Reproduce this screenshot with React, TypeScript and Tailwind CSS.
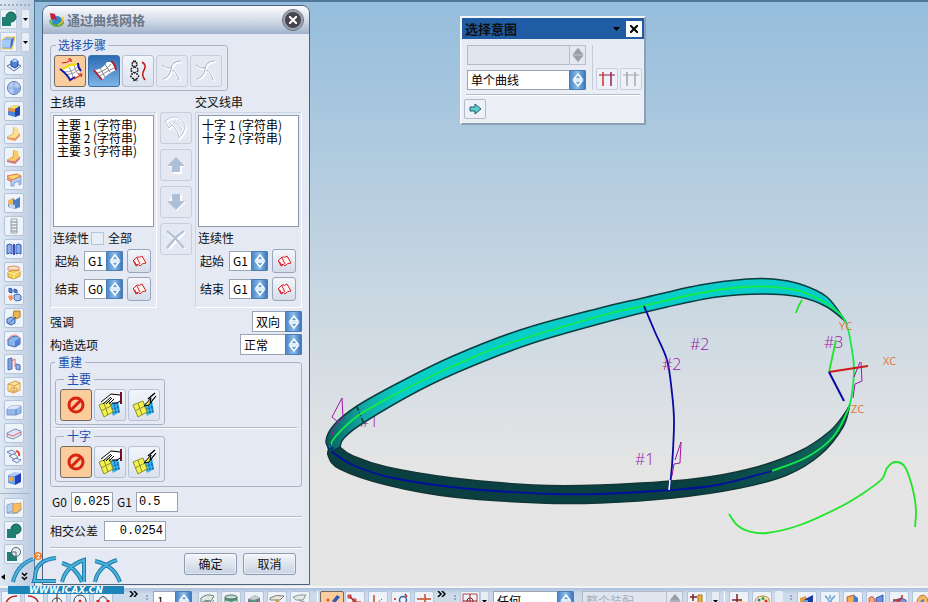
import { useState } from "react";
import type { ReactNode } from "react";
import clsx from "clsx";

type Point = [number, number];

// Catmull-Rom through every point, written out as cubic segments
const curve = (pts: Point[]) => {
  let d = "";
  for (let i = 0; i < pts.length - 1; i++) {
    const p0 = pts[i - 1] || pts[i];
    const p1 = pts[i];
    const p2 = pts[i + 1];
    const p3 = pts[i + 2] || p2;
    d += ` C${p1[0] + (p2[0] - p0[0]) / 6} ${p1[1] + (p2[1] - p0[1]) / 6} ${
      p2[0] - (p3[0] - p1[0]) / 6
    } ${p2[1] - (p3[1] - p1[1]) / 6} ${p2[0]} ${p2[1]}`;
  }
  return d;
};

const open = (pts: Point[]) => `M${pts[0][0]} ${pts[0][1]}${curve(pts)}`;

const upperOuter: Point[] = [
  [331, 452], [326, 441], [334, 425], [357, 406], [400, 382], [453, 356], [520, 330], [600, 308],
  [643, 298], [700, 285], [747, 279], [773, 279], [800, 284], [827, 297], [846, 322],
];
const upperInner: Point[] = [
  [846, 322], [827, 307], [800, 297], [763, 294], [717, 297], [667, 307], [610, 321], [533, 343],
  [470, 367], [420, 390], [363, 423], [344, 438], [340, 447],
];
const lowerInner: Point[] = [
  [340, 447], [353, 456], [387, 467], [453, 478], [533, 485], [600, 485], [693, 479], [753, 468],
  [800, 451], [830, 431], [845, 413], [850, 404],
];
const lowerOuter: Point[] = [
  [850, 404], [843, 427], [820, 455], [787, 475], [740, 488], [673, 498], [600, 503], [540, 503],
  [453, 497], [387, 485], [340, 469], [328, 455], [331, 444],
];
const greenTop: Point[] = [
  [330, 448], [335, 437], [359, 415], [400, 392], [453, 366], [507, 344], [600, 316], [643, 306],
  [700, 293], [743, 287], [773, 287], [803, 292], [833, 308], [846, 323], [852, 350], [854, 370],
  [852, 393], [848, 410], [833, 437], [807, 457], [772, 471],
];
const blueBottom: Point[] = [
  [772, 471], [717, 485], [670, 490], [600, 494], [553, 494], [470, 489], [393, 478], [353, 465],
  [332, 452],
];
const blueSection: Point[] = [
  [644, 306], [655, 332], [667, 360], [672, 393], [674, 420], [673, 450], [671, 477], [669, 490],
];
const looseCurve: Point[] = [
  [729, 514], [737, 525], [748, 531], [767, 533], [800, 525], [840, 507], [865, 492], [882, 479],
  [887, 468], [895, 462], [905, 467], [913, 490], [916, 510], [915, 527],
];

const Scene = () => (
  <svg
    viewBox="35 2 893 584"
    preserveAspectRatio="xMinYMin slice"
    className="block h-full w-full font-['Open_Sans',sans-serif]"
    fill="none"
  >
    <defs>
      <linearGradient id="band" x1="326" x2="400" y1="0" y2="0" gradientUnits="userSpaceOnUse">
        <stop offset="0" stopColor="#0a5c5c" />
        <stop offset="0.5" stopColor="#12a8a4" />
        <stop offset="1" stopColor="#0accc8" />
      </linearGradient>
      <linearGradient id="under" x1="700" x2="850" y1="0" y2="0" gradientUnits="userSpaceOnUse">
        <stop offset="0" stopColor="#0a4042" />
        <stop offset="1" stopColor="#106a60" />
      </linearGradient>
    </defs>
    <text x="359" y="427" fontSize="16" fontWeight="300" fill="#a018a0">#1</text>
    <path
      d={`${open(lowerInner)}${curve(lowerOuter)}Z`}
      fill="url(#under)"
      stroke="#123636"
      strokeWidth="1.5"
    />
    <path
      d={`${open(upperOuter)}${curve(upperInner)}Z`}
      fill="url(#band)"
      stroke="#0c3c40"
      strokeWidth="1.5"
    />
    <path d="M357 407l7 17" stroke="#0c3030" strokeWidth="1.5" strokeDasharray="4 2" />
    <path d={open(greenTop)} stroke="#10ec48" strokeWidth="1.8" />
    <path d={open(blueBottom)} stroke="#00109c" strokeWidth="1.8" />
    <path d={open(blueSection)} stroke="#0808a4" strokeWidth="1.8" />
    <path d={open(looseCurve)} stroke="#20e428" strokeWidth="1.8" />
    <path d="M669 490l1-10" stroke="#fff" strokeWidth="1.5" />
    <path d="M802 300q-4 6-6 13M829 372l7-32" stroke="#20e428" strokeWidth="1.8" />
    <path d="M829 372l39-6" stroke="#d01818" strokeWidth="2" />
    <path d="M829 372l15 29" stroke="#0808a4" strokeWidth="2" />
    <path d="M327 448h7M330 444l3 8" stroke="#00109c" />
    <path
      d="M342 398l-10 19 6 5 5-4-1-20M338 422q-6 6-6 13M861 362l1 19-7 3M860 362l-6 15M853 398l2-14M681 442l-1 21-6 1M681 442l-6 18M674 464l-2 12"
      stroke="#a018a0"
      strokeWidth="1"
    />
    <g fontSize="16" fontWeight="300" fill="#9c18a4">
      <text x="690" y="350">#2</text>
      <text x="662" y="370">#2</text>
      <text x="824" y="348">#3</text>
      <text x="635" y="465">#1</text>
    </g>
    <g fontSize="11" fill="#e07838">
      <text x="839" y="330">YC</text>
      <text x="883" y="365">XC</text>
      <text x="851" y="413">ZC</text>
    </g>
  </svg>
);

const Icon = ({ children, size = "h-4 w-4" }: { children: ReactNode; size?: string }) => (
  <svg viewBox="0 0 16 16" className={clsx(size, "block shrink-0")} fill="none" aria-hidden="true">
    {children}
  </svg>
);

const featureIcons: { name: string; art: ReactNode }[] = [
  {
    name: "拉伸",
    art: (
      <>
        <path d="M1 9l7-4 7 4-7 5z" fill="#e8eefa" stroke="#5c78a8" />
        <path d="M5 4l4-2 3 2v5l-3 2-4-2z" fill="#4c84d8" stroke="#24489c" />
        <path d="M5 4l4 1 3-1-3-2z" fill="#c4dcfc" />
      </>
    ),
  },
  {
    name: "球体",
    art: (
      <>
        <circle cx="8" cy="8" r="6.5" fill="#b4ccf4" stroke="#6080b8" />
        <path d="M8 2v12M2 8h12" stroke="#8ca8d8" />
        <path d="M8 8h6a6 6 0 0 1-6 6z" fill="#84a8e4" />
      </>
    ),
  },
  {
    name: "块",
    art: (
      <>
        <path d="M2 5l6-3 6 1v9l-5 2-7-2z" fill="#4c88dc" />
        <path d="M2 5l6-3 6 1-5 3z" fill="#fce06c" />
        <path d="M2 5l7 1v3L2 8z" fill="#ec9440" />
        <path d="M9 6l5-3v9l-5 2z" fill="#2444b4" />
      </>
    ),
  },
  {
    name: "弯边",
    art: (
      <>
        <path d="M8 1l4 1 1 6-4 4-7-1 5-3z" fill="#fce08c" />
        <path d="M1 11l8 1 5-5v3l-5 5-8-2z" fill="#ec9c60" />
        <path d="M8 1l-1 7-6 3" stroke="#e8b070" />
      </>
    ),
  },
  {
    name: "弯边槽",
    art: (
      <>
        <path d="M8 1l4 1 1 6-4 4-7-1 5-3z" fill="#fccc60" />
        <path d="M1 11l8 1 5-5v3l-5 5-8-2z" fill="#d08078" />
        <path d="M8 1l-1 7-6 3" stroke="#e0a048" />
      </>
    ),
  },
  {
    name: "壳体",
    art: (
      <>
        <path d="M5 8l10-4v8l-2 1V9l-5 2v3H5z" fill="#b4d0f0" stroke="#80a0d0" />
        <path d="M1 4l10-2 4 2-9 4z" fill="#fcd868" stroke="#e87048" />
        <path d="M1 5v3l4 2V8z" fill="#ec8060" />
      </>
    ),
  },
  {
    name: "抽壳",
    art: (
      <>
        <path d="M2 6l5-3 2 2 5-3v10l-5 2-7-2z" fill="#4c80c4" />
        <path d="M2 6l5-3v6l-3 2-2-2z" fill="#ecb858" />
        <path d="M4 9l5 1v4l-7-2z" fill="#c8d4ec" />
      </>
    ),
  },
  {
    name: "螺纹",
    art: (
      <>
        <path d="M5 1h6v14H5z" fill="#eef0f4" stroke="#98a4b4" />
        <path d="M5 4h6M5 7h6M5 10h6M5 13h6" stroke="#788494" />
      </>
    ),
  },
  {
    name: "镜像",
    art: (
      <>
        <path d="M1 4q3-2 5 0v9q-2-2-5 0zM10 4q3-2 5 0v9q-2-2-5 0z" fill="#8cacec" stroke="#3858b8" />
        <path d="M7 3h2v11H7z" fill="#3c50b4" />
      </>
    ),
  },
  {
    name: "阵列",
    art: (
      <>
        <path d="M2 8l6-2 6 1v5l-6 3-6-2z" fill="#f4d058" stroke="#c89830" />
        <path d="M2 3l5-1 6 1v3H2z" fill="#fce8c8" stroke="#e08870" />
        <path d="M2 8l6 2 6-3M8 10v5" stroke="#fcf0a0" />
      </>
    ),
  },
  {
    name: "引用",
    art: (
      <>
        <path d="M3 1l3 1v4L3 5zM8 2l3 1v3L8 5z" fill="#5484d8" stroke="#3458a8" />
        <path d="M8 8l5-1 2 2v4l-5 1-2-2z" fill="#a4c4f0" stroke="#4468b0" />
        <path d="M2 9l4-1 1 4-3 2z" fill="#f08c50" />
      </>
    ),
  },
  {
    name: "修剪体",
    art: (
      <>
        <path d="M8 1h6v6l-4 2-3-3z" fill="#ecb850" stroke="#a87c30" />
        <path d="M1 9l4-2 4 2v4l-4 2-4-2z" fill="#90b8ec" stroke="#3460b0" />
        <path d="M2 14l8-7" stroke="#4858a0" />
      </>
    ),
  },
  {
    name: "分割体",
    art: (
      <>
        <path d="M2 7q3-4 8-4l4 2v6l-5 3-7-2z" fill="#8cb4ec" stroke="#4868b8" />
        <path d="M1 8q2-6 9-6l4 3" stroke="#f08080" />
        <path d="M9 8l5-3v6l-5 3z" fill="#5480dc" />
      </>
    ),
  },
  {
    name: "偏置面",
    art: (
      <>
        <path d="M2 3l4-1v11l-4 1z" fill="#7ca4e4" stroke="#4c6cb4" />
        <path d="M6 5l3-2v8" stroke="#e86850" />
        <path d="M10 8l4 1v5l-4-1z" fill="#94b8ec" stroke="#4c6cb4" />
      </>
    ),
  },
  {
    name: "包裹",
    art: (
      <>
        <path d="M2 5l7-3 5 2v7l-6 3-6-2z" fill="#fce4a0" stroke="#d8a048" />
        <path d="M2 5l6 2 6-3M8 7v7M5 9h6v3H5z" stroke="#dc9c48" />
      </>
    ),
  },
  {
    name: "倒圆",
    art: (
      <>
        <path d="M1 7q2-3 5-3h9v7l-5 2H1z" fill="#94b8e8" stroke="#7c9ccc" />
        <path d="M1 7q2-3 5-3h9l-5 3z" fill="#dce8fc" />
        <path d="M10 7v6" stroke="#5c84c0" />
      </>
    ),
  },
  {
    name: "倒角",
    art: (
      <>
        <path d="M1 8l8-4 6 2v4l-8 4-6-2z" fill="#dce4f4" stroke="#8090b8" />
        <path d="M1 9l6 2 8-4" stroke="#e06868" />
      </>
    ),
  },
  {
    name: "变换",
    art: (
      <>
        <path d="M1 4l5-2 4 3-4 2zM6 12l4-2 5 2-4 3z" fill="#dce8fc" stroke="#7088b8" />
        <path d="M3 8l5-2 4 3-4 2z" fill="#f4f6fc" stroke="#7088b8" />
        <path d="M10 3q4 1 3 5" stroke="#e04830" strokeWidth="2" />
      </>
    ),
  },
  {
    name: "孔",
    art: (
      <>
        <path d="M2 4l7 1v9l-7-2z" fill="#6ca0f0" />
        <path d="M9 5l6-3v9l-6 3z" fill="#2040bc" />
        <path d="M2 4l6-3 7 1-6 3z" fill="#acc8f4" />
        <circle cx="5" cy="8" r="2.5" fill="#f0a848" />
      </>
    ),
  },
];

const cutIcons: { name: string; art: ReactNode }[] = [
  {
    name: "缝合",
    art: (
      <>
        <path d="M1 5l6-2v8l-6 2z" fill="#b4d0f0" stroke="#8cacd4" />
        <path d="M7 4l8-1v7l-4 3H7z" fill="#f8bc5c" stroke="#e0a050" />
        <path d="M1 13h10l4-4" stroke="#7898c8" />
      </>
    ),
  },
  {
    name: "求和",
    art: (
      <>
        <circle cx="10" cy="6" r="5" fill="#208070" stroke="#106050" />
        <path d="M1 6h9v9H1z" fill="#208070" />
      </>
    ),
  },
  {
    name: "求差",
    art: (
      <>
        <path d="M1 6h10v9H1z" fill="#208070" />
        <circle cx="10" cy="6" r="4.5" fill="#e8ecf4" stroke="#506870" />
        <path d="M5 6h5v5" stroke="#506870" />
      </>
    ),
  },
];

const ToolButton = ({ name, art }: { name: string; art: ReactNode }) => (
  <button
    type="button"
    aria-label={name}
    className="flex h-5 w-5 shrink-0 items-center justify-center rounded-xs border border-[#b4c4da] bg-[#eef2f9]"
  >
    <Icon>{art}</Icon>
  </button>
);

const Caret = ({ name }: { name: string }) => (
  <button
    type="button"
    aria-label={name}
    className="flex h-5 w-[9px] items-center justify-center rounded-xs border border-[#c0cde0] bg-[#e8eef7]"
  >
    <svg viewBox="0 0 5 3" className="h-[3px] w-[5px] shrink-0" aria-hidden="true">
      <path d="M0 0h5L2.500 3z" />
    </svg>
  </button>
);

const SideBar = () => (
  <aside className="flex w-[34px] shrink-0 flex-col overflow-hidden bg-linear-to-r from-[#dfe8f3] to-[#bccce1]">
    <div className="mt-1 h-[5px] w-[30px] border-t-2 border-dotted border-[#9cacc2]" />
    <div className="flex h-[23px] gap-1">
      <button type="button" aria-label="求和" className="h-5 w-[17px] border border-[#c0cde0] bg-[#eef2f9]">
        <Icon>{cutIcons[1].art}</Icon>
      </button>
      <Caret name="布尔运算" />
    </div>
    <div className="flex h-[23px] gap-1">
      <button type="button" aria-label="基准平面" className="h-5 w-[17px] border border-[#c0cde0] bg-[#eef2f9]">
        <Icon>
          <path d="M1 6l4-3h9l-3 12H1z" fill="#90b4ec" stroke="#e8cc40" />
          <path d="M10 6l3-3-2 9-2 2z" fill="#3464cc" />
          <path d="M1 6h9l-1 7H1z" fill="#a8c8f8" />
        </Icon>
      </button>
      <Caret name="基准" />
    </div>
    <div className="flex flex-col gap-[3px] pl-1">
      {featureIcons.map((icon) => (
        <ToolButton key={icon.name} {...icon} />
      ))}
    </div>
    <hr className="mt-1 mb-1 w-[30px] border-[#a4b4ca]" />
    <div className="flex flex-col gap-[3px] pl-1">
      {cutIcons.map((icon) => (
        <ToolButton key={icon.name} {...icon} />
      ))}
    </div>
    <div className="mt-2 flex items-center justify-between pr-[6px] pl-[1px]">
      <svg viewBox="0 0 4 6" className="h-[6px] w-1" aria-hidden="true">
        <path d="M4 0v6L0 3z" />
      </svg>
      <svg viewBox="0 0 7 9" className="h-[9px] w-[7px]" fill="none" stroke="#000" strokeWidth="1.5" aria-hidden="true">
        <path d="M1 1l2.500 2.500L6 1M1 5l2.500 2.500L6 5" />
      </svg>
    </div>
  </aside>
);

const Spinner = ({ disabled }: { disabled?: boolean }) => (
  <span
    className={clsx(
      "pointer-events-none absolute inset-y-0 right-0 flex w-[17px] items-center justify-center rounded-r-xs border",
      disabled
        ? "border-[#b8c0cc] bg-[#e4e8f0]"
        : "border-[#4c7cb4] bg-linear-to-r from-[#4c88c8] via-[#8cbce8] to-[#3c78bc]"
    )}
  >
    <svg
      viewBox="0 0 12 14"
      className="h-[14px] w-3 shrink-0"
      fill={disabled ? "#98a0ac" : "#6ca8e0"}
      stroke={disabled ? "#98a0ac" : "#fff"}
      strokeWidth="1.5"
      aria-hidden="true"
    >
      <path d="M6 1l4 5H2zM6 13L2 8h8z" />
    </svg>
  </span>
);

type DropProps = { label: string; value: string; options: string[]; width: string; height?: string; disabled?: boolean };

const Drop = ({ label, value, options, width, height = "h-5", disabled }: DropProps) => (
  <span className={clsx("relative inline-block shrink-0", width, height)}>
    <select
      aria-label={label}
      defaultValue={value}
      disabled={disabled}
      className={clsx(
        "block h-full w-full appearance-none border pl-[3px]",
        disabled
          ? "border-[#b0bac8] bg-[#e0e6f0] text-[#a4aebc] opacity-100"
          : "border-[#9aa6b8] bg-white text-black"
      )}
    >
      {options.map((o) => (
        <option key={o}>{o}</option>
      ))}
    </select>
    <Spinner disabled={disabled} />
  </span>
);

const StepButton = ({ name, look = "plain", children }: { name: string; look?: "plain" | "on" | "blue" | "off"; children: ReactNode }) => (
  <button
    type="button"
    aria-label={name}
    disabled={look === "off"}
    className={clsx(
      "flex h-8 w-8 items-center justify-center rounded-[3px] border",
      look === "plain" && "border-[#b4c2d6] bg-linear-to-b from-[#f2f5fa] to-[#dbe2ee]",
      look === "off" && "border-[#c4cedd] bg-[#e3e8f2]",
      look === "on" && "border-[#746a62] bg-[#fbcd9d]",
      look === "blue" && "border-[#3c70a8] bg-linear-to-b from-[#2c6cb4] to-[#7cb4e4]"
    )}
  >
    <svg viewBox="0 0 28 28" className="h-7 w-7 shrink-0" fill="none" aria-hidden="true">
      {children}
    </svg>
  </button>
);

const GhostCurve = () => (
  <>
    <path d="M24 5q-9 0-10 8t-8 10M5 9q4 4 10 3M15 14q5 2 7 10" stroke="#fff" strokeWidth="2" />
    <path d="M23 4q-9 0-10 8t-8 10M4 8q4 4 10 3M14 13q5 2 7 10" stroke="#a8b4ca" />
  </>
);

const Patch = () => (
  <>
    <path d="M13 13l9-3 2 11-7 4z" fill="#38b4e8" />
    <path d="M14 14l9-2M15 18l9-2M16 22l8-2M18 11l2 12M21 11l2 11" stroke="#1060b0" strokeDasharray="2 1" />
    <path d="M3 14l10-4 4 11-9 5z" fill="#f4f050" stroke="#8c9028" />
    <path d="M5 20l10-5M8 12l4 12" stroke="#8c9028" />
  </>
);

const RebuildGroup = ({ title }: { title: string }) => (
  <fieldset className="w-[110px] rounded-[3px] border border-[#a8b4c6] px-1 pb-[3px]">
    <legend className="ml-1 px-[3px] leading-[14px] text-[#1850b0]">{title}</legend>
    <div className="flex gap-[2px] pt-[3px]">
      <StepButton name={`${title} 无`} look="on">
        <circle cx="14" cy="14" r="7" stroke="#d82410" strokeWidth="3" />
        <path d="M9 19L19 9" stroke="#d82410" strokeWidth="3" />
      </StepButton>
      <StepButton name={`${title} 手工`}>
        <Patch />
        <path d="M7 9q4-6 9-6l8 1v7l-7 1-4-2-5 2z" fill="#fff" />
        <path d="M5 11L15 3l9 1M7 13l8-7M10 13l6-6M13 13l5-5M16 12h5l3-2" stroke="#000" />
        <path d="M25 1v12" stroke="#701030" strokeWidth="2" />
      </StepButton>
      <StepButton name={`${title} 高级`}>
        <Patch />
        <path d="M14 15l7-8-1 5 6-7-7 9z" fill="#f4f050" stroke="#000" />
        <path d="M18 8l7-6" stroke="#000" strokeWidth="1.5" />
      </StepButton>
    </div>
  </fieldset>
);

const Continuity = ({ title, side, value }: { title: string; side: string; value: string }) => (
  <div className="flex h-6 items-center pl-[2px]">
    <span className="w-[29px]">{title}</span>
    <Drop label={`${side} ${title}`} value={value} options={["G0", "G1", "G2"]} width="w-[39px]" />
    <button
      type="button"
      aria-label={`${side} ${title} 约束面`}
      className="ml-1 flex h-6 w-6 items-center justify-center rounded-[3px] border border-[#98a6bc] bg-linear-to-b from-[#f4f6fa] to-[#d4dce8]"
    >
      <Icon>
        <path d="M2 8l4-4q3 1 5-1l4 7q-4 0-6 3-1-3-4-1 0-3-3-4z" fill="#fff4f0" stroke="#d81c28" />
        <path d="M3 9l2 4 2-1M6 5l3 6" stroke="#d81c28" />
      </Icon>
    </button>
  </div>
);

const StringList = ({ label, items }: { label: string; items: string[] }) => (
  <select
    multiple
    aria-label={label}
    className="block h-28 w-full appearance-none overflow-hidden border border-[#8c9aac] bg-white pl-[1px] text-black"
  >
    {items.map((item) => (
      <option key={item} className="h-[13px] min-h-0 p-0 pl-[2px] leading-[13px]">
        {item}
      </option>
    ))}
  </select>
);

const Rule = ({ className }: { className: string }) => (
  <hr className={clsx("h-[2px] border-t border-[#b0bccc] bg-white", className)} />
);

const moveIcons: { name: string; art: ReactNode }[] = [
  {
    name: "反向",
    art: (
      <>
        <path d="M4 8q10-7 15-2 5 3 5 9-1 5-6 10-1-8-7-13L8 15zM13 9q7 3 8 8" stroke="#fff" strokeWidth="2" />
        <path d="M3 7q10-7 15-2 5 3 5 9-1 5-6 10-1-8-7-13L7 14zM12 8q7 3 8 8" stroke="#b8c6da" />
      </>
    ),
  },
  {
    name: "上移",
    art: (
      <>
        <path d="M15 7l9 9h-4v7h-9v-7H6z" fill="#fff" />
        <path d="M14 6l9 9h-5v6h-8v-6H5z" fill="#aebfd8" />
      </>
    ),
  },
  {
    name: "下移",
    art: (
      <>
        <path d="M11 7h9v7h4l-9 9-9-9z" fill="#fff" />
        <path d="M10 6h8v7h5l-9 9-9-9h5z" fill="#aebfd8" />
      </>
    ),
  },
  {
    name: "删除",
    art: (
      <>
        <path d="M6 8l17 16M23 7L7 24" stroke="#fff" strokeWidth="2" />
        <path d="M5 6l8 7 9 10M22 6l-8 6-9 11" stroke="#aebfd8" strokeWidth="2" />
      </>
    ),
  },
];

const MeshDialog = () => {
  const [all, setAll] = useState(false);
  const [g0, setG0] = useState("0.025");
  const [g1, setG1] = useState("0.5");
  const [tolerance, setTolerance] = useState("0.0254");
  const field = "border border-[#98a4b4] bg-white px-[2px] font-['Liberation_Mono',monospace] text-xs text-black";

  return (
    <section className="absolute top-[3px] left-[7px] w-[268px] overflow-hidden rounded-t-lg border border-[#4c6280] bg-[#e4e9f3]">
      <header className="flex h-7 items-center bg-linear-to-b from-[#fdfdfe] via-[#d4dce8] to-[#a0b2cc] pr-[6px] pl-[5px]">
        <Icon>
          <circle cx="9" cy="9" r="5" fill="#2c8cc8" />
          <path d="M2 8q1 6 8 6 5-1 6-5" stroke="#60b040" strokeWidth="2" />
          <path d="M14 5q2 2 0 5l-4 3" stroke="#f0c030" strokeWidth="1.5" />
          <path d="M2 1l5 1 2 6-3-1-3 1z" fill="#c82040" />
        </Icon>
        <h1 className="ml-[3px] flex-1 text-[13px] font-bold text-[#6c7888]">通过曲线网格</h1>
        <button
          type="button"
          aria-label="关闭"
          className="flex h-5 w-5 items-center justify-center rounded-full border-2 border-[#98a0b0] bg-[#484450] outline outline-[#686c7c]"
        >
          <svg viewBox="0 0 8 8" className="h-2 w-2" stroke="#fff" strokeWidth="2" aria-hidden="true">
            <path d="M0 0l8 8M8 0L0 8" />
          </svg>
        </button>
      </header>

      <form className="px-[7px] pt-1 pb-[9px]" onSubmit={(e) => e.preventDefault()}>
        <fieldset className="w-[178px] rounded-[3px] border border-[#a8b4c6] px-[3px] pb-[3px]">
          <legend className="ml-[2px] px-[2px] leading-[14px] text-[#1850b0]">选择步骤</legend>
          <div className="flex gap-[2px] pt-[3px]">
            <StepButton name="主线串" look="on">
              <path d="M4 12q6 0 9-4 5 1 9-2 1 6 3 8-4 6-11 9-3-6-10-11z" fill="#fff" />
              <path d="M8 15q9 0 15-6M10 18q8-1 14-6M13 10q3 5 4 10M18 8q1 5 4 9" stroke="#999" />
              <path d="M4 12q6 0 9-4 5 1 9-2" stroke="#f0dc00" strokeWidth="2" />
              <path d="M4 12q7 5 10 11l5-3M22 6q0 5 3 8" stroke="#1818a8" strokeWidth="2" />
              <path d="M6 6q5 0 9-3M12 2h3v3M18 22l7-4M22 17l4 0-1 3" stroke="#c01818" />
            </StepButton>
            <StepButton name="交叉线串" look="blue">
              <path d="M4 13q8 0 13-8h5l4 8q-8 3-14 10-3-5-8-10z" fill="#fff" />
              <path d="M4 13l8 10M21 4q4 3 5 9" stroke="#b02030" strokeWidth="2" />
              <path d="M7 16q9-2 14-9M10 19q7-5 14-8M10 11l5 9M15 7l5 8" stroke="#888" />
            </StepButton>
            <StepButton name="脊线">
              <path d="M9 4q8 3 1 6t1 6-2 8M12 4q-8 3-1 6t-1 6 4 8" stroke="#222" strokeWidth="1.500" strokeDasharray="2 1" />
              <path d="M18 5q5 3 2 8t1 10" stroke="#c01818" strokeWidth="1.500" />
            </StepButton>
            <StepButton name="脊线串" look="off"><GhostCurve /></StepButton>
            <StepButton name="主模板" look="off"><GhostCurve /></StepButton>
          </div>
        </fieldset>

        <div className="flex h-[21px] items-center justify-between">
          <span>主线串</span>
          <span className="w-[107px]">交叉线串</span>
        </div>

        <div className="flex items-start justify-between">
          <div className="w-[107px] border border-t-[#ccd6e4] border-r-white border-b-white border-l-[#ccd6e4] px-[2px] pt-[2px] pb-[6px]">
            <StringList label="主线串" items={["主要 1 (字符串)", "主要 2 (字符串)", "主要 3 (字符串)"]} />
            <div className="flex h-[22px] items-center">
              <span>连续性</span>
              <label className="ml-[2px] flex items-center gap-1">
                <input
                  type="checkbox"
                  checked={all}
                  onChange={(e) => setAll(e.target.checked)}
                  className="h-[13px] w-[13px] appearance-none border border-[#b4c6dc] bg-[#e8eef8] checked:bg-[#4c88cc]"
                />
                全部
              </label>
            </div>
            <div className="flex flex-col gap-1">
              <Continuity title="起始" side="主线串" value="G1" />
              <Continuity title="结束" side="主线串" value="G0" />
            </div>
          </div>

          <div className="flex flex-col gap-[5px]">
            {moveIcons.map(({ name, art }) => (
              <StepButton key={name} name={name} look="off">{art}</StepButton>
            ))}
          </div>

          <div className="w-[107px] border border-t-[#ccd6e4] border-r-white border-b-white border-l-[#ccd6e4] px-[2px] pt-[2px] pb-[6px]">
            <StringList label="交叉线串" items={["十字 1 (字符串)", "十字 2 (字符串)"]} />
            <div className="flex h-[22px] items-center">连续性</div>
            <div className="flex flex-col gap-1">
              <Continuity title="起始" side="交叉线串" value="G1" />
              <Continuity title="结束" side="交叉线串" value="G1" />
            </div>
          </div>
        </div>

        <div className="mt-[3px] flex items-center justify-between">
          <span>强调</span>
          <Drop label="强调" value="双向" options={["双向", "主要", "十字"]} width="w-[50px]" height="h-[21px]" />
        </div>
        <div className="mt-[2px] flex items-center justify-between">
          <span>构造选项</span>
          <Drop label="构造选项" value="正常" options={["正常", "样条", "简单"]} width="w-[62px]" height="h-[21px]" />
        </div>

        <fieldset className="rounded-[3px] border border-[#a8b4c6] px-1 pb-1">
          <legend className="px-[3px] leading-[14px] text-[#1850b0]">重建</legend>
          <div className="pt-[3px]">
            <RebuildGroup title="主要" />
          </div>
          <Rule className="mt-[2px]" />
          <RebuildGroup title="十字" />
        </fieldset>

        <div className="mt-[5px] flex h-5 items-center gap-1 pl-[2px]">
          <label htmlFor="g0">G0</label>
          <input id="g0" value={g0} onChange={(e) => setG0(e.target.value)} className={clsx(field, "h-5 w-[42px]")} />
          <label htmlFor="g1">G1</label>
          <input id="g1" value={g1} onChange={(e) => setG1(e.target.value)} className={clsx(field, "h-5 w-[42px]")} />
        </div>
        <Rule className="mt-1" />
        <div className="mt-[3px] flex h-5 items-center gap-[6px]">
          <label htmlFor="tolerance">相交公差</label>
          <input
            id="tolerance"
            value={tolerance}
            onChange={(e) => setTolerance(e.target.value)}
            className={clsx(field, "h-5 w-[62px] text-right")}
          />
        </div>
        <Rule className="mt-[6px]" />
        <div className="mt-1 flex justify-end gap-[6px] pr-[6px]">
          {["确定", "取消"].map((text) => (
            <button
              key={text}
              type="button"
              className="h-[22px] w-[53px] rounded-[3px] border border-[#8c9ab0] bg-linear-to-b from-[#f4f6fa] via-[#dde4ee] to-[#c8d2e2] leading-5 shadow-[inset_0_0_0_1px_#ffffff80]"
            >
              {text}
            </button>
          ))}
        </div>
      </form>
    </section>
  );
};

const IntentPanel = () => (
  <section className="absolute top-[14px] left-[425px] w-[186px] border-2 border-[#f4f6fa] border-r-[#8ca0b8] border-b-[#8ca0b8] bg-linear-to-b from-[#e4eaf4] to-[#eceff5] pb-1">
    <header className="flex h-[21px] items-center bg-[#205ca4] pr-[2px] pl-[3px]">
      <h2 className="flex-1 text-[13px] font-bold">选择意图</h2>
      <svg viewBox="0 0 7 4" className="mr-[6px] h-1 w-[7px]" aria-hidden="true">
        <path d="M0 0h7L3.500 4z" />
      </svg>
      <button type="button" aria-label="关闭" className="flex h-4 w-4 items-center justify-center bg-white">
        <svg viewBox="0 0 8 8" className="h-2 w-2" stroke="#000" strokeWidth="2" aria-hidden="true">
          <path d="M0 0l8 8M8 0L0 8" />
        </svg>
      </button>
    </header>
    <div className="flex pt-[6px] pr-[3px] pl-[5px]">
      <div className="flex flex-col gap-[5px]">
        <Drop label="过滤器" value="" options={[""]} width="w-[119px]" disabled />
        <Drop label="选择意图" value="单个曲线" options={["单个曲线", "相连曲线", "相切曲线"]} width="w-[119px]" />
      </div>
      <div className="ml-[6px] flex items-end gap-[2px] border-l border-[#c4ccd8] pl-[3px]">
        {["#d03030", "#a8a0a8"].map((color, i) => (
          <button
            key={color}
            type="button"
            aria-label={i ? "跟随圆角" : "在相交处停止"}
            disabled={i === 1}
            className="flex h-[22px] w-[22px] items-center justify-center rounded-xs border border-[#c4cedc] bg-[#eef1f7]"
          >
            <svg viewBox="0 0 18 18" className="h-[18px] w-[18px]" aria-hidden="true">
              <path d="M1 5h16" stroke={i ? "#a8a8b0" : "#882048"} />
              <path d="M5 2v14" stroke={color} strokeWidth="1.500" />
              <path d="M13 2v14" stroke={i ? "#a8a8b0" : "#902050"} strokeWidth="1.500" />
            </svg>
          </button>
        ))}
      </div>
    </div>
    <Rule className="mx-1 mt-1" />
    <button
      type="button"
      aria-label="下一步"
      className="mt-[3px] ml-[2px] flex h-5 w-[22px] items-center justify-center rounded-xs border border-[#b0bccc] bg-[#eef1f7]"
    >
      <Icon>
        <path d="M3 6h5V3l6 5-6 5v-3H3z" fill="#58d0c8" stroke="#205878" />
      </Icon>
    </button>
  </section>
);

const markStrokes =
  "M5 30Q9 13 25 7M48 6Q27 8 27 26l-1 3H48M54 11Q68 15 74 30M54 30Q58 14 76 8V30M87 9Q106 13 112 30M87 30Q90 14 109 8";

const Logo = () => (
  <svg viewBox="0 0 120 44" className="absolute bottom-[6px] left-2 h-11 w-[120px]" fill="none" aria-label="ICAX">
    <path d={markStrokes} stroke="#1c7cac" strokeWidth="4" />
    <path d={markStrokes} stroke="#4cb4dc" strokeWidth="2" />
    <circle cx="30" cy="4" r="4" fill="#f08030" />
    <path d="M28 3q2-2 4 0l-3 3h3" stroke="#fff" />
    <path d="M0 34h116v8H0z" fill="#1c84b8" />
    <text
      x="58"
      y="41"
      textAnchor="middle"
      fontSize="9"
      fill="#fff"
      className="font-['DejaVu_Sans',sans-serif] font-bold italic"
    >
      WWW.ICAX.CN
    </text>
  </svg>
);

const barArt = {
  arc: <path d="M2 13Q4 3 14 3" stroke="#c02020" strokeWidth="1.500" />,
  arcDown: <path d="M2 3q10 0 11 10" stroke="#c02020" strokeWidth="1.500" />,
  cross: (
    <>
      <circle cx="8" cy="10" r="5" stroke="#444" />
      <path d="M8 1v14M2 10h12" stroke="#601010" />
    </>
  ),
  circle: (
    <>
      <circle cx="8" cy="8" r="6" stroke="#444" />
      <circle cx="8" cy="8" r="1.500" fill="#d02020" />
    </>
  ),
  arch: (
    <>
      <path d="M3 14V8q5-9 10 0v6" stroke="#444" />
      <path d="M3 7v2M13 7v2" stroke="#d02020" strokeWidth="3" />
    </>
  ),
  sheet: (
    <>
      <path d="M1 5q6-5 13-2l-3 5q-6-2-10 2zM1 11q5-4 10-2" fill="#dce8e0" stroke="#6c8078" />
      <path d="M2 13l9-2 3-4" stroke="#4ca080" />
    </>
  ),
  stack: (
    <>
      <path d="M2 4v9h12V4q-6 4-12 0z" fill="#4c9878" stroke="#587068" />
      <ellipse cx="8" cy="4" rx="6" ry="2" fill="#c4dcd0" stroke="#587068" />
      <path d="M2 8q6 3 12 0" stroke="#dcece4" />
    </>
  ),
  box: (
    <>
      <path d="M2 6l7-4 5 3v9H2z" fill="#707c84" />
      <path d="M5 6h5v6H5z" fill="#48a080" />
      <path d="M2 6l7-4 5 3-6 2z" fill="#c4ccd0" />
    </>
  ),
  table: (
    <>
      <path d="M1 5q6-4 14-2l-4 4H1z" fill="#e8e8d8" stroke="#788078" />
      <path d="M7 7l3 3-3 5" stroke="#d89020" strokeWidth="2" />
    </>
  ),
  flap: (
    <>
      <path d="M1 4q6-3 13-2l-3 5H4z" fill="#e4eae8" stroke="#889490" />
      <path d="M7 7l5 2-3 5" stroke="#98a8a4" strokeWidth="1.500" />
    </>
  ),
  pen: (
    <>
      <path d="M8 9l5-6 3 2-5 6z" fill="#3458b0" />
      <circle cx="4" cy="8" r="1.500" fill="#d06020" />
      <path d="M1 14l8-3" stroke="#803010" />
    </>
  ),
  nodes: (
    <>
      <path d="M2 3l12 11" stroke="#903030" strokeWidth="1.500" />
      <path d="M1 2h3v3H1zM6 6h3v3H6zM10 9h4v3h-4z" stroke="#c02020" />
    </>
  ),
  axis: (
    <>
      <path d="M4 2v11h10" stroke="#c84828" strokeWidth="1.500" />
      <path d="M4 13l8-7" stroke="#c84828" strokeDasharray="2 1" />
    </>
  ),
  orbit: (
    <>
      <circle cx="10" cy="7" r="3.500" stroke="#3460a0" strokeWidth="1.500" />
      <path d="M2 5v2M1 10h4M12 1l2 3" stroke="#c02020" strokeWidth="1.500" />
    </>
  ),
  triad: <path d="M9 1v9l6 3M9 9L2 13M1 6h7M9 6h6" stroke="#c84828" strokeWidth="1.500" />,
  target: (
    <>
      <path d="M1 1h14v14H1z" stroke="#b04848" />
      <path d="M8 1v14M1 8h14" stroke="#902020" />
      <circle cx="8" cy="8" r="3" stroke="#902020" />
    </>
  ),
  plusBox: (
    <>
      <path d="M4 1v7M1 4h7" stroke="#802020" strokeWidth="1.500" />
      <path d="M9 2h4v12H9z" fill="#f0b040" stroke="#a87820" />
    </>
  ),
  move: (
    <>
      <path d="M6 1v13M1 7h10" stroke="#802020" strokeWidth="1.500" />
      <path d="M8 8l7 1v6H8z" fill="#f0c040" />
    </>
  ),
  palette: (
    <>
      <path d="M1 9q0-6 8-6t6 8l-5 3H1z" fill="#f4e8b8" stroke="#b08838" />
      <circle cx="5" cy="7" r="1.500" fill="#3c70d0" />
      <circle cx="9" cy="5.500" r="1.500" fill="#30a040" />
      <circle cx="12" cy="8" r="1.500" fill="#d03030" />
    </>
  ),
  solid: (
    <>
      <path d="M1 5l6-2v11H1z" fill="#e0a040" />
      <path d="M6 6l8-4v12H6z" fill="#2038a0" />
      <path d="M4 7h5v7H4z" fill="#60a0e0" />
    </>
  ),
  sprout: (
    <>
      <path d="M8 14q0-8-5-11M8 14q0-8 5-11M8 6V2" stroke="#68a0d8" strokeWidth="1.500" />
      <path d="M5 12h6v3H5z" fill="#e08040" />
    </>
  ),
  fold: (
    <>
      <path d="M2 4l7-2v12H2z" fill="#f0b050" stroke="#c05830" />
      <path d="M9 2l4 3v9H9z" fill="#4878d0" />
    </>
  ),
  bend: (
    <>
      <path d="M8 5l7-3v12l-7 1z" fill="#6890e0" stroke="#3858a8" />
      <path d="M1 5q5-4 6 4v5H1z" fill="#f4a880" stroke="#d05040" />
    </>
  ),
  offset: (
    <>
      <path d="M2 8l8-3 5 2v8H2z" fill="#7898d8" stroke="#4860a0" />
      <path d="M5 10l6-5V2M2 7h8" stroke="#c03030" strokeWidth="1.500" />
    </>
  ),
  ring: (
    <>
      <path d="M3 14Q2 3 9 2q7 2 4 12z" fill="#f4bc60" stroke="#d07040" />
      <path d="M7 14q-1-6 3-7" stroke="#4878d0" strokeWidth="2" />
    </>
  ),
};

const Row = ({ names, label }: { names: (keyof typeof barArt)[]; label: string }) => (
  <div className="flex gap-[3px]">
    {names.map((n, i) => (
      <ToolButton key={n} name={`${label} ${i + 1}`} art={barArt[n]} />
    ))}
  </div>
);

const Grip = () => <span className="mt-1 h-3 w-[3px] shrink-0 border-l-2 border-dotted border-[#94a8c4]" />;

const More = () => (
  <svg viewBox="0 0 9 6" className="h-[6px] w-[9px] shrink-0" fill="none" stroke="#000" strokeWidth="1.500" aria-hidden="true">
    <path d="M1 0l3 3-3 3M5 0l3 3-3 3" />
  </svg>
);

const BottomBar = () => (
  <footer className="flex h-4 shrink-0 items-start overflow-hidden border-t-2 border-[#f2f4f6] bg-linear-to-b from-[#a9c0dc] to-[#cddaea] to-40% pt-[3px] whitespace-nowrap">
    <div className="flex shrink-0 pl-[1px]">
      <Row label="曲线" names={["arc", "arcDown", "cross", "circle", "arch"]} />
    </div>
    <div className="ml-4 flex shrink-0 gap-2"><More /><Grip /></div>
    <div className="ml-1 shrink-0">
      <Drop label="图层" value="1" options={["1", "2", "3"]} width="w-[39px]" />
    </div>
    <div className="ml-[6px] shrink-0">
      <Row label="曲面" names={["sheet", "stack", "box", "table", "flap"]} />
    </div>
    <div className="ml-[7px] flex shrink-0 border-l border-white pl-[2px]">
      <button
        type="button"
        aria-label="捕捉点"
        className="flex h-6 w-6 justify-center rounded-xs border border-[#746a62] bg-[#fbcd9d]"
      >
        <Icon>{barArt.pen}</Icon>
      </button>
      <div className="pl-[1px]">
        <Row label="捕捉" names={["nodes", "axis", "orbit", "triad"]} />
      </div>
    </div>
    <div className="ml-[3px] flex shrink-0 gap-2"><More /><Grip /></div>
    <div className="ml-[3px] flex shrink-0">
      <ToolButton name="选择" art={barArt.target} />
      <Caret name="选择选项" />
    </div>
    <div className="ml-1 flex shrink-0 gap-2">
      <Drop label="类型过滤器" value="任何" options={["任何", "曲线", "面"]} width="w-[81px]" />
      <Drop label="选择范围" value="整个装配" options={["整个装配"]} width="w-[101px]" disabled />
    </div>
    <div className="ml-1 flex shrink-0 gap-1">
      <ToolButton name="工件坐标系" art={barArt.plusBox} />
      <Caret name="坐标系选项" />
    </div>
    <div className="ml-[4px] flex shrink-0 border-l border-white pl-1">
      <Row label="显示" names={["move", "palette"]} />
      <span className="ml-[3px] h-5 w-2 rounded-xs bg-[#e8eef7]" />
    </div>
    <div className="ml-[7px] flex shrink-0 gap-1">
      <Grip />
      <Row label="建模" names={["solid", "sprout", "fold", "bend", "offset", "ring"]} />
    </div>
  </footer>
);

const App = () => {
  return (
    <div className="relative flex h-screen flex-col overflow-hidden font-['Noto_Sans_CJK_SC',sans-serif] text-xs text-[#101010]">
      <div className="flex min-h-0 flex-1">
        <SideBar />
        <main className="relative min-w-0 flex-1 border-t-2 border-l border-[#4f7898] bg-linear-to-b from-[#95bddc] via-[#c9d7e2] via-50% to-[#e5e5e5] to-80%">
          <Scene />
          <MeshDialog />
          <IntentPanel />
        </main>
      </div>
      <BottomBar />
      <Logo />
    </div>
  );
};

export default App;
